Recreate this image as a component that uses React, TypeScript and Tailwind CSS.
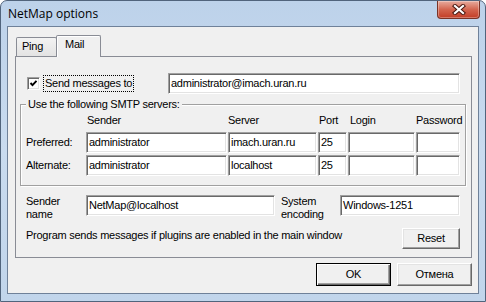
import type { ReactNode } from 'react';

function Field({ value, className }: { value?: string; className: string }) {
  return (
    <div
      className={`flex h-[21px] items-center overflow-hidden whitespace-nowrap border border-t-[#a0a0a0] border-l-[#a0a0a0] border-r-white border-b-white bg-white pl-[2px] shadow-[inset_1px_1px_0_#696969,inset_-1px_-1px_0_#e3e3e3] ${className}`}
    >
      {value}
    </div>
  );
}

function Button({ children, className, primary }: { children: ReactNode; className: string; primary?: boolean }) {
  const frame = primary
    ? 'border-black shadow-[inset_1px_1px_0_#fff,inset_-1px_-1px_0_#696969,inset_-2px_-2px_0_#a0a0a0]'
    : 'border-t-white border-l-white border-r-[#696969] border-b-[#696969] shadow-[inset_-1px_-1px_0_#a0a0a0,inset_1px_1px_0_#e3e3e3]';
  return (
    <div className={`flex items-center justify-center border bg-[#f0f0f0] ${frame} ${className}`}>{children}</div>
  );
}

function CloseButton() {
  return (
    <div className="mr-[5px] flex h-[18px] w-[43px] items-center justify-center rounded-b-[4px] border border-t-0 border-[#7a3326] bg-gradient-to-b from-[#e6ab9e] via-[#d3654f] to-[#c23c25] shadow-[inset_0_0_0_1px_rgba(255,255,255,0.3)]">
      <svg width="14" height="11" viewBox="0 0 14 11">
        <path d="M3 2 L11 9 M11 2 L3 9" stroke="#4a1810" strokeWidth="4.2" strokeLinecap="square" />
        <path d="M3 2 L11 9 M11 2 L3 9" stroke="#ffffff" strokeWidth="2.2" strokeLinecap="square" />
      </svg>
    </div>
  );
}

function Checkbox() {
  return (
    <div className="flex h-[13px] w-[13px] items-center justify-center border border-t-[#a0a0a0] border-l-[#a0a0a0] border-r-white border-b-white bg-white shadow-[inset_1px_1px_0_#696969,inset_-1px_-1px_0_#e3e3e3]">
      <svg width="9" height="9" viewBox="0 0 9 9">
        <polyline points="1.5,4 3.5,6.2 7.5,1.8" fill="none" stroke="#000" strokeWidth="1.9" />
      </svg>
    </div>
  );
}

export default function App() {
  return (
    <div className="flex h-[302px] w-[486px] flex-col overflow-hidden rounded-t-[7px] border border-[#51647c] bg-gradient-to-b from-[#bdd2ea] via-[#c9dbef] to-[#c1d5eb] font-['Liberation_Sans',Arial,sans-serif] text-[11px] leading-[13px] tracking-[-0.25px] text-black">
      {/* Title bar */}
      <div className="flex h-[25px] items-start justify-between">
        <div className="pl-[7px] pt-[5px] font-['Segoe_UI','Open_Sans',sans-serif] text-[12px] leading-[16px] tracking-normal">
          NetMap options
        </div>
        <CloseButton />
      </div>

      {/* Client area */}
      <div className="flex flex-1 px-[6px] pb-[7px]">
        <div className="flex h-[268px] w-[472px] flex-col border border-[#6f8199] bg-[#f0f0f0] pl-[7px] pt-[8px]">
          {/* Tabs */}
          <div className="flex h-[21px] items-end pl-[1px]">
            <div className="h-[19px] w-[41px] rounded-t-[2px] border border-b-0 border-[#898c95] bg-gradient-to-b from-[#f3f3f3] to-[#e3e3e3] pl-[5px] pt-[2px]">
              Ping
            </div>
            <div className="relative z-10 -mb-[1px] -ml-[1px] h-[22px] w-[45px] rounded-t-[2px] border border-b-0 border-[#898c95] bg-[#f0f0f0] pl-[8px] pt-[2px] shadow-[inset_1px_1px_0_#fff]">
              Mail
            </div>
          </div>

          {/* Tab panel */}
          <div className="flex h-[202px] w-[457px] flex-col border border-[#898c95] bg-[#f0f0f0]">
            <div className="mt-[16px] flex h-[21px] items-center">
              <div className="flex w-[152px] items-center pl-[11px]">
                <Checkbox />
                <span className="ml-[3px] border border-dotted border-black px-[1px] leading-[15px]">Send messages to</span>
              </div>
              <Field className="w-[292px]" value="administrator@imach.uran.ru" />
            </div>

            {/* SMTP group */}
            <div className="relative ml-[4px] mt-[10px] h-[82px] w-[446px] border border-[#a0a0a0] pl-[5px] pt-[9px] shadow-[inset_1px_1px_0_#fff,1px_1px_0_#fff]">
              <span className="absolute -top-[7px] left-[5px] bg-[#f0f0f0] px-[2px]">Use the following SMTP servers:</span>
              <div className="flex h-[13px]">
                <div className="w-[60px]" />
                <div className="w-[142px] pl-[1px]">Sender</div>
                <div className="w-[90px]">Server</div>
                <div className="w-[30px] pl-[1px]">Port</div>
                <div className="w-[68px] pl-[2px]">Login</div>
                <div>Password</div>
              </div>
              <div className="mt-[5px] flex items-center">
                <div className="w-[60px]">Preferred:</div>
                <Field className="mr-[1px] w-[141px]" value="administrator" />
                <Field className="mr-[1px] w-[89px]" value="imach.uran.ru" />
                <Field className="mr-[1px] w-[29px]" value="25" />
                <Field className="mr-[1px] w-[67px]" />
                <Field className="w-[44px]" />
              </div>
              <div className="mt-[2px] flex items-center">
                <div className="w-[60px]">Alternate:</div>
                <Field className="mr-[1px] w-[141px]" value="administrator" />
                <Field className="mr-[1px] w-[89px]" value="localhost" />
                <Field className="mr-[1px] w-[29px]" value="25" />
                <Field className="mr-[1px] w-[67px]" />
                <Field className="w-[44px]" />
              </div>
            </div>

            {/* Sender name / encoding */}
            <div className="mt-[9px] flex items-start pl-[10px]">
              <div className="w-[60px]">
                Sender
                <br />
                name
              </div>
              <Field className="w-[189px]" value="NetMap@localhost" />
              <div className="ml-[6px] w-[59px]">
                System
                <br />
                encoding
              </div>
              <Field className="w-[120px]" value="Windows-1251" />
            </div>

            <div className="mt-[7px] flex items-start justify-between pl-[10px] pr-[11px]">
              <div className="pt-[1px]">Program sends messages if plugins are enabled in the main window</div>
              <Button className="h-[21px] w-[58px]">Reset</Button>
            </div>
          </div>

          {/* Dialog buttons */}
          <div className="mt-[5px] flex w-[457px] justify-end gap-[6px]">
            <Button primary className="h-[23px] w-[75px]">
              OK
            </Button>
            <Button className="h-[23px] w-[75px]">Отмена</Button>
          </div>
        </div>
      </div>
    </div>
  );
}
